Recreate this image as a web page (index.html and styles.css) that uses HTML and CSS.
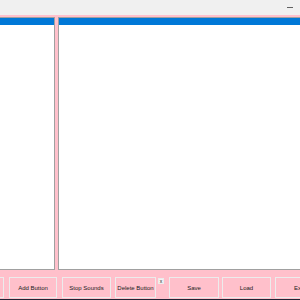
FILE: index.html
```html
<!DOCTYPE html>
<html lang="en">
<head>
  <meta charset="UTF-8">
  <title>Soundboard</title>
  <link rel="stylesheet" href="styles.css">
</head>
<body>
  <div class="window">
    <div class="titlebar"><span class="minimize"></span></div>
    <div class="main">
      <div class="panel panel-left"><div class="selected"></div></div>
      <div class="panel panel-right"><div class="selected"></div></div>
    </div>
    <div class="toolbar">
      <button class="btn btn-hidden"></button>
      <button class="btn btn-add">Add Button</button>
      <button class="btn btn-stop">Stop Sounds</button>
      <button class="btn btn-delete">Delete Button</button>
      <span class="close-x">x</span>
      <button class="btn btn-save">Save</button>
      <button class="btn btn-load">Load</button>
      <button class="btn btn-exit">Exit</button>
    </div>
    <div class="taskbar"></div>
  </div>
</body>
</html>
```
FILE: styles.css
```css
:root {
  --pink: #ffc0cb;
  --title: #f0f0f0;
  --select: #0078d7;
  --border: #a0a0a0;
  --btn-border: #ececec;
}

body {
  margin: 0;
  width: 300px;
  height: 300px;
  overflow: hidden;
  font-family: 'Liberation Sans', Arial, sans-serif;
}

.window {
  display: flex;
  flex-direction: column;
  height: 300px;
  background: var(--pink);
}

.titlebar {
  height: 15px;
  background: var(--title);
  display: flex;
  justify-content: flex-end;
  align-items: flex-start;
}

.minimize {
  width: 6px;
  height: 1px;
  background: #606060;
  margin: 7px 7px 0 0;
}

.main {
  display: flex;
  gap: 3px;
  padding-top: 2px;
  height: 253px;
}

.panel {
  background: #fff;
  border: 1px solid var(--border);
  box-sizing: border-box;
}

.panel-left {
  width: 55px;
  border-left: none;
}

.panel-right {
  flex: 1;
  border-right: none;
}

.selected {
  height: 7px;
  background: var(--select);
}

.toolbar {
  display: flex;
  align-items: flex-start;
  padding-top: 7px;
  height: 21px;
  overflow: hidden;
}

.btn {
  height: 21px;
  padding: 0;
  background: var(--pink);
  border: 1px solid var(--btn-border);
  box-sizing: border-box;
  font-family: inherit;
  font-size: 6px;
  color: #222;
  white-space: nowrap;
  overflow: hidden;
  flex: none;
}

.btn-hidden { margin-left: -44px; width: 48px; }
.btn-add { margin-left: 5px; width: 48px; }
.btn-stop { margin-left: 5px; width: 49px; }
.btn-delete { margin-left: 4px; width: 41px; }
.btn-save { margin-left: 5px; width: 50px; }
.btn-load { margin-left: 3px; width: 49px; }
.btn-exit { margin-left: 4px; width: 48px; }

.close-x {
  margin: 1px 0 0 2px;
  width: 6px;
  height: 6px;
  box-sizing: border-box;
  border: 1px solid var(--btn-border);
  background: #f4f4f4;
  font-size: 5px;
  line-height: 4px;
  text-align: center;
  color: #222;
  flex: none;
}

.taskbar {
  height: 1px;
  margin-top: auto;
  background: #222233;
}
```
